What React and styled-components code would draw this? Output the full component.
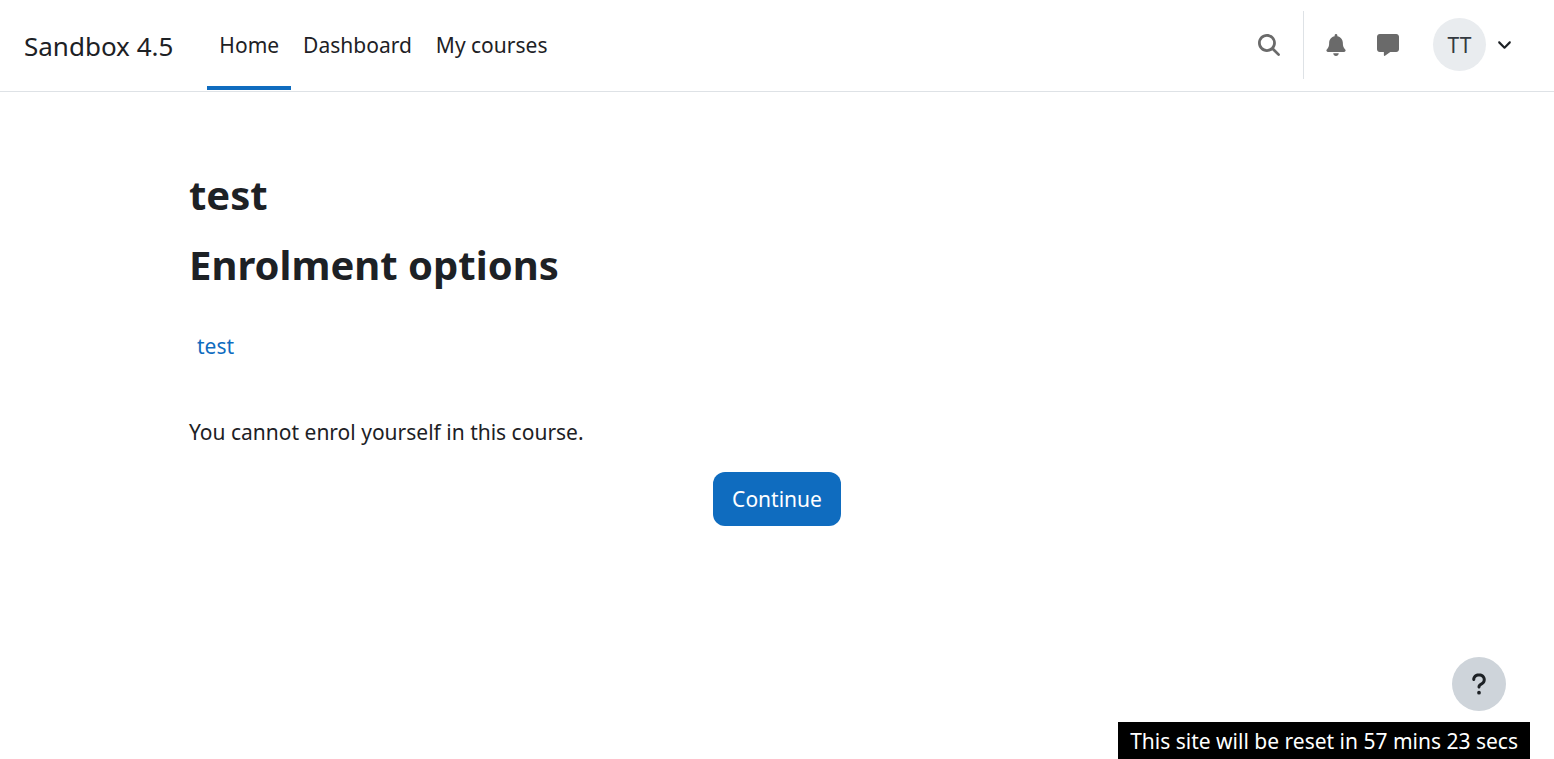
import React from "react";
import styled, { createGlobalStyle } from "styled-components";
import { FaMagnifyingGlass, FaBell, FaMessage, FaAngleDown, FaQuestion } from "react-icons/fa6";

const GlobalStyle = createGlobalStyle`
  *, *::before, *::after { box-sizing: border-box; }
  body {
    margin: 0;
    background: #fff;
    color: #1d2125;
    font-family: "Segoe UI", "Noto Sans", "Open Sans", sans-serif;
    font-size: 21px;
    line-height: 34px;
  }
  button { font: inherit; color: inherit; cursor: pointer; }
`;

const Header = styled.header`
  display: flex;
  align-items: stretch;
  height: 92px;
  padding: 0 24px;
  border-bottom: 1px solid #dee2e6;
`;

const Brand = styled.a`
  display: flex;
  align-items: center;
  margin-right: 34px;
  color: #1d2125;
  font-size: 26px;
  text-decoration: none;
  white-space: nowrap;
`;

const Nav = styled.nav`
  display: flex;
`;

const NavLink = styled.a`
  display: flex;
  align-items: center;
  margin-bottom: 1px;
  padding: 4px 12px 0;
  border-bottom: 4px solid ${(p) => (p.$active ? "#0f6cbf" : "transparent")};
  color: #1d2125;
  text-decoration: none;
  white-space: nowrap;
`;

const Tools = styled.div`
  display: flex;
  align-items: center;
  margin-left: auto;
  padding-bottom: 2px;
`;

const IconButton = styled.button`
  display: flex;
  align-items: center;
  justify-content: center;
  width: 52px;
  height: 68px;
  padding: 0;
  border: 0;
  background: transparent;
  color: #6a6a6a;
  font-size: 22px;
`;

const Divider = styled.span`
  width: 1px;
  height: 68px;
  margin: 0 6px 0 8px;
  background: #dee2e6;
`;

const UserMenu = styled.button`
  display: flex;
  align-items: center;
  gap: 10px;
  margin-left: 19px;
  padding: 0 17px 0 0;
  border: 0;
  background: transparent;
  svg { font-size: 17px; }
`;

const Avatar = styled.span`
  display: flex;
  align-items: center;
  justify-content: center;
  width: 53px;
  height: 53px;
  border-radius: 50%;
  background: #e9ecef;
  color: #343a40;
`;

const Main = styled.main`
  max-width: 1224px;
  margin: 0 auto;
  padding: 78px 24px 0;
`;

const Title = styled.h1`
  margin: 0 0 20px;
  font-size: 40px;
  line-height: 50px;
  font-weight: 700;
`;

const Course = styled.h3`
  margin: 39px 0 52px;
  padding: 0 8px;
  font-size: 21px;
  line-height: 34px;
  font-weight: 400;
  a { color: #0f6cbf; text-decoration: none; }
`;

const Notice = styled.p`
  margin: 0 0 23px;
`;

const Actions = styled.div`
  display: flex;
  justify-content: center;
`;

const PrimaryButton = styled.button`
  height: 54px;
  padding: 0 19px;
  border: 0;
  border-radius: 12px;
  background: #0f6cbf;
  color: #fff;
`;

const HelpButton = styled.button`
  position: fixed;
  right: 48px;
  bottom: 48px;
  display: flex;
  align-items: center;
  justify-content: center;
  width: 54px;
  height: 54px;
  padding: 0;
  border: 0;
  border-radius: 50%;
  background: #ced4da;
  font-size: 24px;
`;

const ResetBanner = styled.div`
  position: fixed;
  right: 24px;
  bottom: 0;
  height: 37px;
  padding: 2px 12px 0;
  background: #000;
  color: #fff;
  white-space: nowrap;
`;

export default function App() {
  return (
    <>
      <GlobalStyle />
      <Header>
        <Brand href="#">Sandbox 4.5</Brand>
        <Nav aria-label="Site navigation">
          <NavLink href="#" $active aria-current="page">Home</NavLink>
          <NavLink href="#">Dashboard</NavLink>
          <NavLink href="#">My courses</NavLink>
        </Nav>
        <Tools>
          <IconButton type="button" aria-label="Toggle search input"><FaMagnifyingGlass /></IconButton>
          <Divider />
          <IconButton type="button" aria-label="Notifications"><FaBell /></IconButton>
          <IconButton type="button" aria-label="Messages"><FaMessage /></IconButton>
          <UserMenu type="button" aria-label="User menu">
            <Avatar>TT</Avatar>
            <FaAngleDown />
          </UserMenu>
        </Tools>
      </Header>
      <Main>
        <Title>test</Title>
        <Title as="h2">Enrolment options</Title>
        <Course><a href="#">test</a></Course>
        <Notice>You cannot enrol yourself in this course.</Notice>
        <Actions>
          <PrimaryButton type="button">Continue</PrimaryButton>
        </Actions>
      </Main>
      <HelpButton type="button" aria-label="Show footer"><FaQuestion /></HelpButton>
      <ResetBanner>This site will be reset in 57 mins 23 secs</ResetBanner>
    </>
  );
}
